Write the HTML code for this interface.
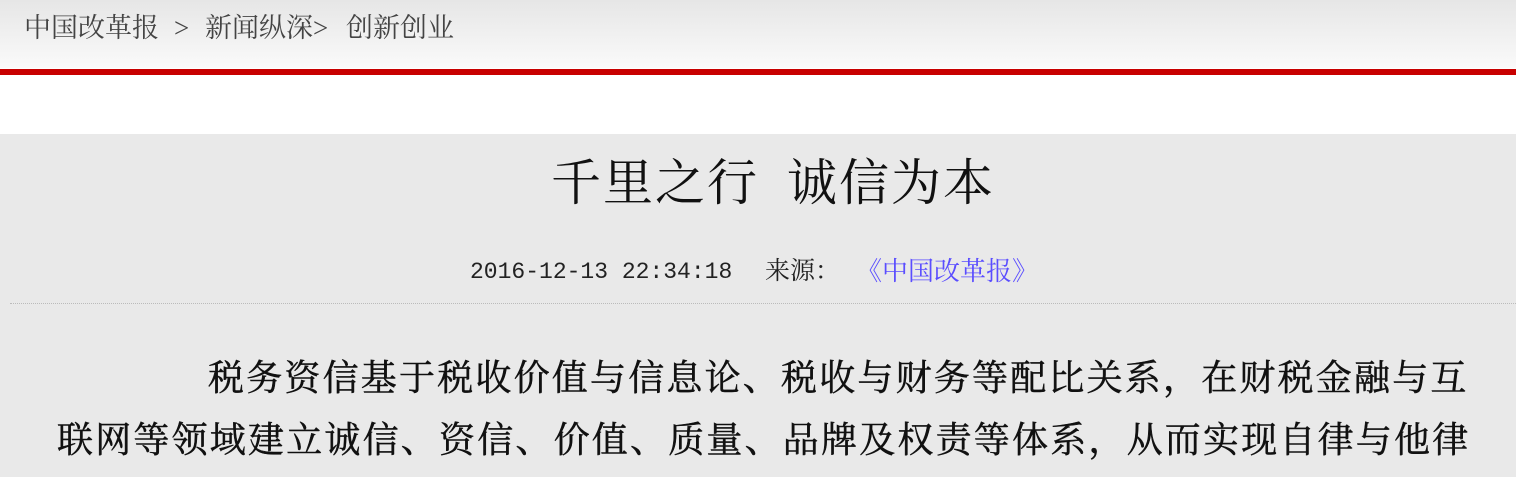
<!DOCTYPE html>
<html><head><meta charset="utf-8"><style>
html,body{margin:0;padding:0;width:1516px;height:477px;overflow:hidden;background:#fff;}
body{font-family:"Liberation Serif","Noto Serif CJK SC",serif;}
.hd{position:absolute;left:0;top:0;width:1516px;height:68px;background:linear-gradient(#e6e6e6,#fafafa);}
.bc{position:absolute;top:10px;font-size:27px;color:#444;white-space:nowrap;line-height:36px;}
.red{position:absolute;left:0;top:69px;width:1516px;height:6px;background:#c80000;}
.main{position:absolute;left:0;top:134px;width:1516px;height:343px;background:#e9e9e9;}
.t{position:absolute;top:153px;font-size:50px;line-height:60px;color:#111;white-space:pre;letter-spacing:2px;}
.m{position:absolute;top:257px;font-size:25px;line-height:30px;color:#222;white-space:pre;}
.d{font-family:"Liberation Mono",monospace;font-size:23px;}
.dot{position:absolute;left:10px;top:303px;width:1506px;border-top:1px dotted #bbb;}
.p{position:absolute;font-size:36px;letter-spacing:2.2px;color:#111;white-space:nowrap;line-height:40px;-webkit-text-stroke:0.5px #111;}
</style></head><body>
<div class="hd"></div>
<div class="bc" style="left:24px">中国改革报</div>
<div class="bc" style="left:174px">&gt;</div>
<div class="bc" style="left:205px">新闻纵深&gt;</div>
<div class="bc" style="left:346px">创新创业</div>
<div class="red"></div>
<div class="main"></div>
<div class="t" style="left:551px">千里之行</div>
<div class="t" style="left:787px">诚信为本</div>
<div class="m d" style="left:470px">2016-12-13 22:34:18</div>
<div class="m" style="left:765px">来源：</div>
<div class="m" style="left:856px;color:#5a4dff;font-size:26px">《中国改革报》</div>
<div class="dot"></div>
<div class="p" style="left:208px;top:358px;">税务资信基于税收价值与信息论、税收与财务等配比关系，在财税金融与互</div>
<div class="p" style="left:57px;top:420px;">联网等领域建立诚信、资信、价值、质量、品牌及权责等体系，从而实现自律与他律</div>
</body></html>
